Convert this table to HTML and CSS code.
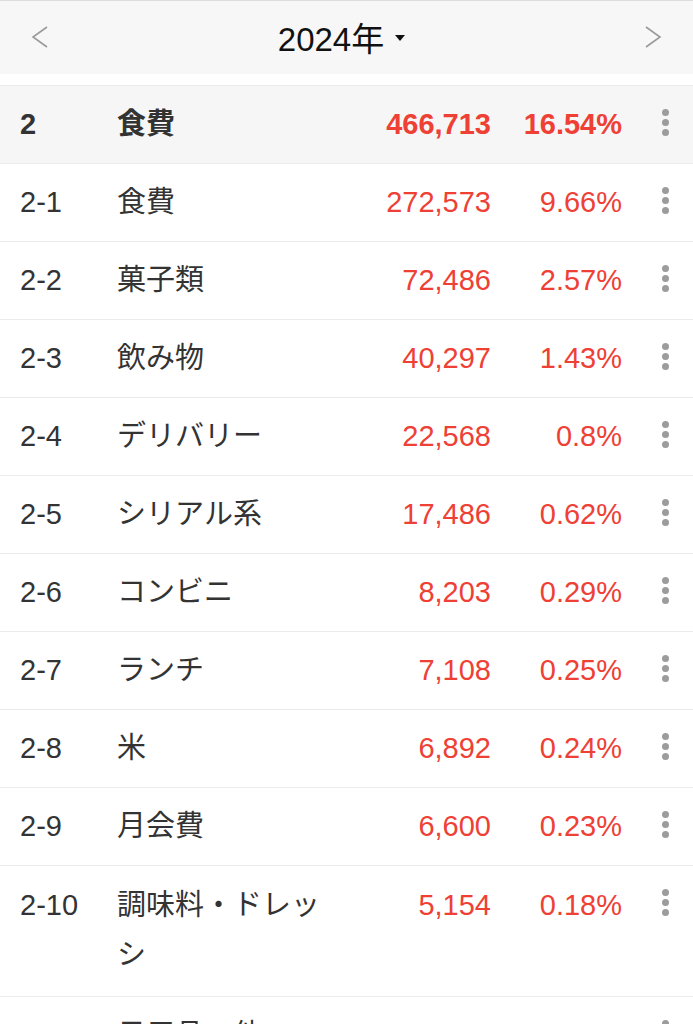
FILE: index.html
```html
<!DOCTYPE html>
<html lang="ja">
<head>
<meta charset="utf-8">
<title>2024年 食費</title>
<link rel="stylesheet" href="styles.css">
</head>
<body>
<header class="year-bar">
  <button class="nav" aria-label="前の年">
    <svg width="18" height="24" viewBox="0 0 18 24"><polyline points="16,2 2,12 16,22" fill="none" stroke="#9a9a9a" stroke-width="1.6"/></svg>
  </button>
  <div class="year">2024年<span class="caret"></span></div>
  <button class="nav" aria-label="次の年">
    <svg width="18" height="24" viewBox="0 0 18 24"><polyline points="2,2 16,12 2,22" fill="none" stroke="#9a9a9a" stroke-width="1.6"/></svg>
  </button>
</header>

<ul class="category-list">
  <li class="row summary"><span class="code">2</span><span class="name">食費</span><span class="amount">466,713</span><span class="pct">16.54%</span><span class="more"><i></i><i></i><i></i></span></li>
  <li class="row"><span class="code">2-1</span><span class="name">食費</span><span class="amount">272,573</span><span class="pct">9.66%</span><span class="more"><i></i><i></i><i></i></span></li>
  <li class="row"><span class="code">2-2</span><span class="name">菓子類</span><span class="amount">72,486</span><span class="pct">2.57%</span><span class="more"><i></i><i></i><i></i></span></li>
  <li class="row"><span class="code">2-3</span><span class="name">飲み物</span><span class="amount">40,297</span><span class="pct">1.43%</span><span class="more"><i></i><i></i><i></i></span></li>
  <li class="row"><span class="code">2-4</span><span class="name">デリバリー</span><span class="amount">22,568</span><span class="pct">0.8%</span><span class="more"><i></i><i></i><i></i></span></li>
  <li class="row"><span class="code">2-5</span><span class="name">シリアル系</span><span class="amount">17,486</span><span class="pct">0.62%</span><span class="more"><i></i><i></i><i></i></span></li>
  <li class="row"><span class="code">2-6</span><span class="name">コンビニ</span><span class="amount">8,203</span><span class="pct">0.29%</span><span class="more"><i></i><i></i><i></i></span></li>
  <li class="row"><span class="code">2-7</span><span class="name">ランチ</span><span class="amount">7,108</span><span class="pct">0.25%</span><span class="more"><i></i><i></i><i></i></span></li>
  <li class="row"><span class="code">2-8</span><span class="name">米</span><span class="amount">6,892</span><span class="pct">0.24%</span><span class="more"><i></i><i></i><i></i></span></li>
  <li class="row"><span class="code">2-9</span><span class="name">月会費</span><span class="amount">6,600</span><span class="pct">0.23%</span><span class="more"><i></i><i></i><i></i></span></li>
  <li class="row"><span class="code">2-10</span><span class="name">調味料・ドレッシ</span><span class="amount">5,154</span><span class="pct">0.18%</span><span class="more"><i></i><i></i><i></i></span></li>
  <li class="row"><span class="code">2-11</span><span class="name">日用品・他</span><span class="amount">4,313</span><span class="pct">0.15%</span><span class="more"><i></i><i></i><i></i></span></li>
</ul>
</body>
</html>
```

FILE: styles.css
```css
html, body {
  margin: 0;
  padding: 0;
  background: #ffffff;
}

body {
  font-family: "Liberation Sans", "Noto Sans CJK JP", sans-serif;
  color: #333333;
  overflow: hidden;
}

.year-bar {
  height: 73px;
  border-top: 1px solid #dcdcdc;
  background: #f7f7f7;
  display: flex;
  align-items: center;
  justify-content: space-between;
  padding: 0 31px 0 31px;
}

.nav {
  background: none;
  border: 0;
  padding: 0;
  width: 18px;
  height: 24px;
  display: flex;
  margin-top: -2px;
}

.year {
  font-size: 33px;
  color: #111111;
  display: flex;
  align-items: center;
  margin-top: -2px;
  margin-right: 10px;
}

.caret {
  width: 0;
  height: 0;
  border-left: 5px solid transparent;
  border-right: 5px solid transparent;
  border-top: 6px solid #111111;
  margin-left: 11px;
  margin-top: 3px;
}

.category-list {
  list-style: none;
  margin: 11px 0 0 0;
  padding: 0;
}

.row {
  display: grid;
  grid-template-columns: 97px 206px 168px 131px 1fr;
  align-items: start;
  padding: 14px 0 14px 20px;
  line-height: 49px;
  font-size: 29px;
  border-bottom: 1px solid #ececec;
}

.row:nth-child(11) {
  padding-bottom: 16px;
  line-height: 50px;
}

.summary {
  background: #f6f6f6;
  border-top: 1px solid #ececec;
  font-weight: bold;
}

.code {
  color: #333333;
  white-space: nowrap;
}

.name {
  color: #333333;
}

.amount,
.pct {
  color: #ee4035;
  text-align: right;
  white-space: nowrap;
}

.more {
  height: 49px;
  display: flex;
  flex-direction: column;
  justify-content: center;
  gap: 3px;
  padding-left: 40px;
  margin-top: -2px;
}

.more i {
  display: block;
  width: 7px;
  height: 7px;
  border-radius: 50%;
  background: #9c9c9c;
}
```
